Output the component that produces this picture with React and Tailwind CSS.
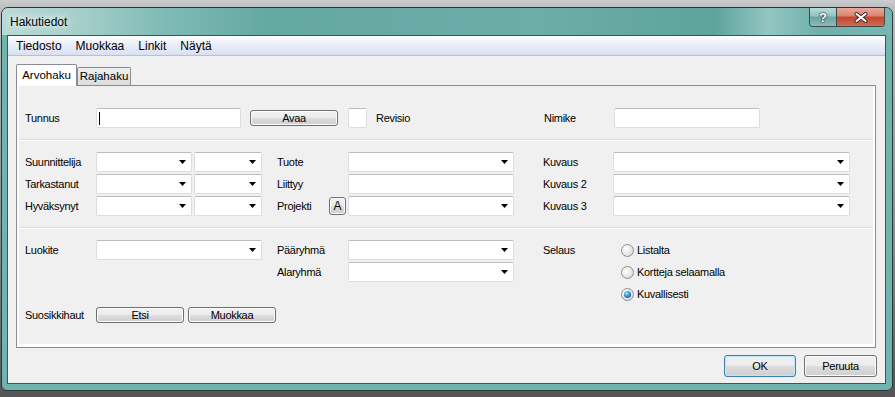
const ui = "font-['Liberation_Sans',Arial,sans-serif] text-[11px] tracking-[-0.3px] text-black leading-none";

function Label({ w, children }) {
  return <div className={`${w} shrink-0 ${ui}`}>{children}</div>;
}

function TextBox({ w, children }) {
  return (
    <div className={`${w} h-[20px] shrink-0 flex items-center bg-white border border-[#dadde2] border-t-[#b9bcc1] rounded-[2px]`}>
      {children}
    </div>
  );
}

function Combo({ w }) {
  return (
    <div className={`${w} h-[20px] shrink-0 flex items-center justify-end pr-[5px] bg-white border border-[#dadde2] border-t-[#b9bcc1] rounded-[2px]`}>
      <svg width="7" height="4" viewBox="0 0 7 4">
        <path d="M0 0h7L3.5 4z" fill="#000" />
      </svg>
    </div>
  );
}

function Btn({ w, h, def, children }) {
  return (
    <div
      className={`${w} ${h} shrink-0 flex items-center justify-center rounded-[3px] border ${
        def ? "border-[#3c7fb1] shadow-[inset_0_0_0_1px_#bfe6f7]" : "border-[#707070] shadow-[inset_0_0_0_1px_#fbfbfb]"
      } bg-[linear-gradient(to_bottom,#f2f2f2_0%,#ebebeb_50%,#dddddd_51%,#cfcfcf_100%)] ${ui}`}
    >
      {children}
    </div>
  );
}

function Radio({ checked, children }) {
  return (
    <div className="h-[20px] flex items-center">
      <span className="w-[13px] h-[13px] shrink-0 rounded-full border border-[#8e8f8f] bg-[radial-gradient(circle_at_35%_35%,#ffffff,#ebebeb_45%,#cdcdcd)] flex items-center justify-center">
        {checked && (
          <span className="w-[7px] h-[7px] rounded-full bg-[radial-gradient(circle_at_40%_35%,#a8e4ff,#2b8bd3_50%,#0d4e86)]" />
        )}
      </span>
      <span className={`ml-[3px] ${ui}`}>{children}</span>
    </div>
  );
}

function Separator() {
  return <div className="h-[2px] shrink-0 border-t border-[#d5dde4] bg-white" />;
}

const row = "h-[20px] flex items-center";

export default function App() {
  return (
    <div className="w-[895px] h-[397px] overflow-hidden pt-[7px] pl-[1px] bg-[linear-gradient(to_bottom,#cacbcc_0%,#bdbebf_2%,#8a8b8c_60%,#555555_100%)]">
      <div className="w-[892px] h-[384px] overflow-hidden rounded-t-[7px] rounded-b-[6px] border border-[#2b3a39] bg-[#6fb4af] flex flex-col">
        {/* title bar */}
        <div className="h-[27px] shrink-0 flex justify-between bg-[linear-gradient(to_right,#b9d9d6_0%,#a8d0cc_8%,#80bbb6_18%,#64a8a2_30%,#6cada8_60%,#5ea39d_80%,#93c6c2_86%,#6fb0ab_92%,#7ab7b2_100%)]">
          <div className="self-center pl-[8px] font-['Liberation_Sans',Arial,sans-serif] text-[12px] text-black leading-none [text-shadow:0_0_6px_#ffffff,0_0_10px_#ffffff]">
            Hakutiedot
          </div>
          <div className="self-start mr-[7px] flex rounded-b-[4px] border border-t-0 border-[#3a4d4c] overflow-hidden">
            <div className="w-[27px] h-[18px] flex items-center justify-center border-r border-[#3a4d4c] bg-[linear-gradient(to_bottom,#b8dbd8,#95c3c0_45%,#6fa3a0_50%,#88bdb9)]">
              <span className="font-['Liberation_Sans',Arial,sans-serif] font-bold text-[13px] text-white leading-none [text-shadow:0_0_1px_#1f2f2e,0_0_1px_#1f2f2e,0_0_2px_#1f2f2e]">
                ?
              </span>
            </div>
            <div className="w-[47px] h-[18px] flex items-center justify-center bg-[linear-gradient(to_bottom,#e9a99a,#d8836f_45%,#c4442c_50%,#d26b53)]">
              <svg width="14" height="11" viewBox="0 0 14 11">
                <path d="M2.5 2l9 7M11.5 2l-9 7" stroke="#3b2522" strokeWidth="4" strokeLinecap="round" />
                <path d="M2.5 2l9 7M11.5 2l-9 7" stroke="#ffffff" strokeWidth="2.2" strokeLinecap="round" />
              </svg>
            </div>
          </div>
        </div>

        {/* client */}
        <div className="ml-[5px] mr-[6px] h-[349px] shrink-0 border border-[#3d5553] bg-[#f0f0f0] flex flex-col">
          {/* menu */}
          <div className="h-[20px] shrink-0 flex items-center pl-[8px] gap-[14px] border-b border-[#b9c0d3] bg-[linear-gradient(to_bottom,#ffffff,#eaeef8_45%,#dae0f1)] font-['Liberation_Sans',Arial,sans-serif] text-[12px] text-black leading-none">
            <span>Tiedosto</span>
            <span>Muokkaa</span>
            <span>Linkit</span>
            <span>Näytä</span>
          </div>

          {/* tabs */}
          <div className="mt-[8px] h-[21px] shrink-0 pl-[8px] flex items-end font-['Liberation_Sans',Arial,sans-serif] text-[11.5px] text-black leading-none">
            <div className="relative z-10 w-[61px] h-[22px] -mb-px flex items-center justify-center border border-b-0 border-[#898c95] bg-white rounded-t-[2px]">
              Arvohaku
            </div>
            <div className="w-[54px] h-[18px] flex items-center justify-center border border-b-0 border-[#898c95] bg-[linear-gradient(to_bottom,#f0f0f0,#dcdcdc)] rounded-t-[2px]">
              Rajahaku
            </div>
          </div>

          {/* panel */}
          <div className="ml-[8px] w-[860px] h-[263px] shrink-0 border border-[#898c95] bg-white px-[2px] pb-[3px] flex flex-col">
            <div className="flex-1 bg-[#f0f0f0] flex flex-col">
              {/* section 1 */}
              <div className="h-[53px] shrink-0 pt-[22px] pl-[6px]">
                <div className={row}>
                  <Label w="w-[71px]">Tunnus</Label>
                  <TextBox w="w-[145px]">
                    <span className="ml-[2px] w-[1px] h-[13px] bg-black" />
                  </TextBox>
                  <div className="ml-[9px]">
                    <Btn w="w-[88px]" h="h-[16px]">Avaa</Btn>
                  </div>
                  <div className="ml-[10px]">
                    <TextBox w="w-[19px]" />
                  </div>
                  <div className="ml-[9px]">
                    <Label w="w-[168px]">Revisio</Label>
                  </div>
                  <Label w="w-[70px]">Nimike</Label>
                  <TextBox w="w-[146px]" />
                </div>
              </div>

              <Separator />

              {/* section 2 */}
              <div className="h-[86px] shrink-0 pt-[11px] pl-[6px] flex flex-col gap-[2px]">
                <div className={row}>
                  <Label w="w-[71px]">Suunnittelija</Label>
                  <Combo w="w-[96px]" />
                  <div className="ml-[2px]"><Combo w="w-[68px]" /></div>
                  <div className="ml-[15px]"><Label w="w-[71px]">Tuote</Label></div>
                  <Combo w="w-[166px]" />
                  <div className="ml-[29px]"><Label w="w-[70px]">Kuvaus</Label></div>
                  <Combo w="w-[237px]" />
                </div>
                <div className={row}>
                  <Label w="w-[71px]">Tarkastanut</Label>
                  <Combo w="w-[96px]" />
                  <div className="ml-[2px]"><Combo w="w-[68px]" /></div>
                  <div className="ml-[15px]"><Label w="w-[71px]">Liittyy</Label></div>
                  <TextBox w="w-[166px]" />
                  <div className="ml-[29px]"><Label w="w-[70px]">Kuvaus 2</Label></div>
                  <Combo w="w-[237px]" />
                </div>
                <div className={row}>
                  <Label w="w-[71px]">Hyväksynyt</Label>
                  <Combo w="w-[96px]" />
                  <div className="ml-[2px]"><Combo w="w-[68px]" /></div>
                  <div className="ml-[15px]"><Label w="w-[52px]">Projekti</Label></div>
                  <div className="w-[17px] h-[18px] shrink-0 flex items-center justify-center rounded-[3px] border border-[#707070] shadow-[inset_0_0_0_1px_#fbfbfb] bg-[linear-gradient(to_bottom,#f2f2f2_0%,#ebebeb_50%,#dddddd_51%,#cfcfcf_100%)] font-['Liberation_Sans',Arial,sans-serif] text-[12px] text-black leading-none">
                    A
                  </div>
                  <div className="ml-[2px]"><Combo w="w-[166px]" /></div>
                  <div className="ml-[29px]"><Label w="w-[70px]">Kuvaus 3</Label></div>
                  <Combo w="w-[237px]" />
                </div>
              </div>

              <Separator />

              {/* section 3 */}
              <div className="flex-1 pt-[11px] pl-[6px] flex flex-col">
                <div className="flex">
                  <div className="flex flex-col gap-[2px]">
                    <div className={row}>
                      <Label w="w-[71px]">Luokite</Label>
                      <Combo w="w-[166px]" />
                      <div className="ml-[15px]"><Label w="w-[71px]">Pääryhmä</Label></div>
                      <Combo w="w-[166px]" />
                    </div>
                    <div className={`${row} pl-[252px]`}>
                      <Label w="w-[71px]">Alaryhmä</Label>
                      <Combo w="w-[166px]" />
                    </div>
                  </div>
                  <div className="ml-[29px] flex">
                    <div className={row}>
                      <Label w="w-[78px]">Selaus</Label>
                    </div>
                    <div className="flex flex-col gap-[2px]">
                      <Radio>Listalta</Radio>
                      <Radio>Kortteja selaamalla</Radio>
                      <Radio checked>Kuvallisesti</Radio>
                    </div>
                  </div>
                </div>
                <div className="mt-[3px] h-[16px] flex items-center">
                  <Label w="w-[71px]">Suosikkihaut</Label>
                  <Btn w="w-[88px]" h="h-[16px]">Etsi</Btn>
                  <div className="ml-[4px]">
                    <Btn w="w-[88px]" h="h-[16px]">Muokkaa</Btn>
                  </div>
                </div>
              </div>
            </div>
          </div>

          {/* dialog buttons */}
          <div className="mt-[7px] h-[22px] shrink-0 flex justify-end gap-[8px] pr-[8px]">
            <Btn w="w-[72px]" h="h-[22px]" def>OK</Btn>
            <Btn w="w-[73px]" h="h-[22px]">Peruuta</Btn>
          </div>
        </div>
      </div>
    </div>
  );
}
